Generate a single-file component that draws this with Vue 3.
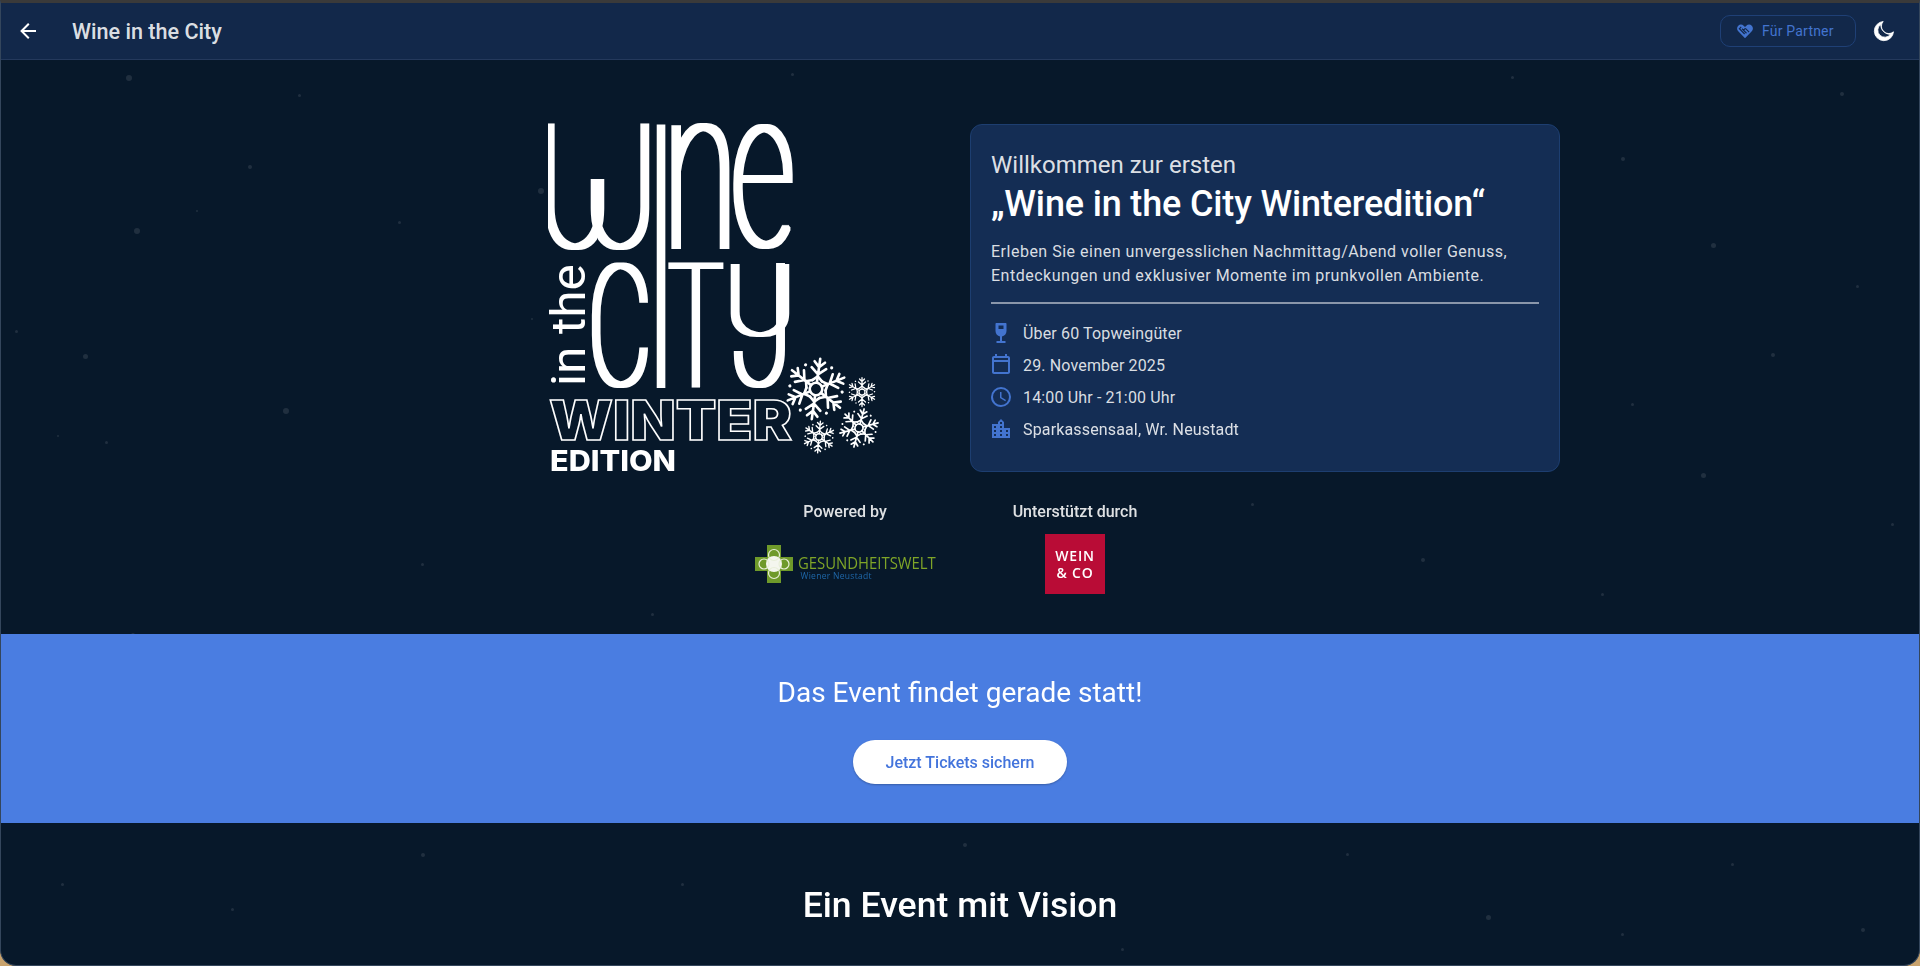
<template>
  <div class="app">
    <div class="stars">
      <span
        v-for="(s, i) in sterne"
        :key="i"
        class="star"
        :style="{ left: s[0] + 'px', top: s[1] + 'px', width: s[2] + 'px', height: s[2] + 'px' }"
      ></span>
    </div>

    <header class="bar">
      <button class="icon-btn back" aria-label="Zurück">
        <svg viewBox="0 0 24 24" width="24" height="24"><path d="M20,11V13H8L13.5,18.5L12.08,19.92L4.16,12L12.08,4.08L13.5,5.5L8,11H20Z" /></svg>
      </button>
      <div class="bar-title">Wine in the City</div>
      <button class="partner">
        <svg viewBox="0 0 24 24" width="18" height="18" class="partner-icon">
          <path d="M12 21.5 3 12.4C.9 10.2.9 6.9 3 4.9c2-1.9 5.200-1.900 7.200 0L12 6.600l1.800-1.700c2-1.900 5.200-1.900 7.200 0 2.100 2 2.100 5.300 0 7.500z" />
          <path class="partner-cut" d="M7 6.500 4.500 9l7 7M10 11l4 4M12.500 8.500l5 5M12.500 8.500 10 11 8 9" />
        </svg>
        Für Partner
      </button>
      <button class="icon-btn moon" aria-label="Design">
        <svg viewBox="0 0 24 24" width="24" height="24"><path d="M11.200 2.500A9.600 9.600 0 1 0 21.500 12.800 7.300 7.300 0 0 1 11.200 2.500M8.600 5.600a10 10 0 0 0 9.800 9.800A7 7 0 1 1 8.600 5.600Z" /></svg>
      </button>
    </header>

    <main class="seite">
      <section class="hero">
        <div class="hero-row">
          <svg class="logo" viewBox="0 0 422 356" width="422" height="356" role="img" aria-label="Wine in the City Winter Edition">
            <defs>
              <!-- macht die duennen Buchstaben nur seitlich breiter -->
              <filter id="breit" filterUnits="userSpaceOnUse" x="-10" y="-10" width="300" height="300">
                <feMorphology operator="dilate" radius="3 0.8" />
              </filter>
            </defs>
            <g class="tall" filter="url(#breit)">
              <text
                v-for="(b, i) in buchstaben"
                :key="i"
                :transform="`translate(${b.x} ${b.y}) scale(${b.sx} ${b.sy})`"
              >{{ b.c }}</text>
            </g>
            <rect x="39" y="0" width="18" height="58" class="logo-cut" />
            <text class="logo-in" transform="translate(37 265) rotate(-90)" textLength="122" lengthAdjust="spacingAndGlyphs">in the</text>
            <text class="logo-winter" x="1" y="319" textLength="243" lengthAdjust="spacingAndGlyphs">WINTER</text>
            <text class="logo-edition" x="2" y="350" textLength="126" lengthAdjust="spacingAndGlyphs">EDITION</text>

            <g
              v-for="(f, i) in flocken"
              :key="'f' + i"
              class="flake"
              :transform="`translate(${f.x} ${f.y}) scale(${f.s}) rotate(${f.r})`"
            >
              <circle r="6" />
              <g v-for="a in 6" :key="a" :transform="`rotate(${a * 60})`">
                <path d="M0 -6V-29M0 -14l-7 -6M0 -14l7 -6M0 -21l-5 -5M0 -21l5 -5M-4.500 -8l-6 2M4.500 -8l6 2" />
                <circle cx="12" cy="-22" r="1.500" class="dot" />
              </g>
            </g>
          </svg>

          <div class="karte">
            <div class="willkommen">Willkommen zur ersten</div>
            <h1>„Wine in the City Winteredition“</h1>
            <p>Erleben Sie einen unvergesslichen Nachmittag/Abend voller Genuss, Entdeckungen und exklusiver Momente im prunkvollen Ambiente.</p>
            <hr />
            <ul>
              <li v-for="f in fakten" :key="f.text">
                <svg viewBox="0 0 24 24" width="24" height="24"><path :d="f.icon" /></svg>
                {{ f.text }}
              </li>
            </ul>
          </div>
        </div>

        <div class="sponsoren">
          <div class="sponsor">
            <div class="sponsor-label">Powered by</div>
            <div class="gw">
              <svg viewBox="0 0 38 38" width="38" height="38">
                <path d="M12 0H26V12H38V26H26V38H12V26H0V12H12Z" fill="#6f9a2a" />
                <circle cx="19" cy="19" r="8" fill="#f4f6ee" />
                <circle cx="19" cy="10" r="5.500" fill="none" stroke="#e8efd8" stroke-width="1.200" />
                <circle cx="19" cy="28" r="5.500" fill="none" stroke="#e8efd8" stroke-width="1.200" />
                <circle cx="9" cy="19" r="5" fill="none" stroke="#e8efd8" stroke-width="1.200" />
                <circle cx="29" cy="19" r="5" fill="none" stroke="#e8efd8" stroke-width="1.200" />
              </svg>
              <div class="gw-text">
                <div class="gw-name">GESUNDHEITSWELT</div>
                <div class="gw-ort">Wiener Neustadt</div>
              </div>
            </div>
          </div>
          <div class="sponsor">
            <div class="sponsor-label">Unterstützt durch</div>
            <div class="wein">WEIN<br />&amp; CO</div>
          </div>
        </div>
      </section>

      <section class="band">
        <h2>Das Event findet gerade statt!</h2>
        <button class="tickets">Jetzt Tickets sichern</button>
      </section>

      <section class="vision">
        <h2>Ein Event mit Vision</h2>
      </section>
    </main>
  </div>
</template>

<script setup>
const sterne = [
  [125, 72, 6], [297, 91, 3], [247, 162, 4], [537, 185, 6], [195, 207, 2], [133, 225, 6],
  [397, 218, 3], [14, 327, 3], [530, 315, 2], [82, 351, 5], [282, 405, 6], [56, 432, 2],
  [104, 438, 3], [790, 70, 3], [1510, 73, 3], [1620, 154, 4], [1839, 89, 4], [1855, 282, 3],
  [1710, 240, 5], [1630, 400, 3], [1770, 350, 4], [1700, 470, 5], [1890, 520, 3], [1250, 500, 3],
  [1420, 555, 4], [1600, 590, 3], [130, 630, 4], [420, 560, 3], [650, 610, 3], [420, 850, 4],
  [230, 905, 3], [680, 880, 3], [962, 840, 4], [1485, 912, 5], [1730, 860, 3], [1860, 925, 4],
  [1120, 945, 3], [60, 880, 3], [1345, 850, 3], [1620, 930, 3]
]

const buchstaben = [
  { c: 'U', x: -9, y: 126, sx: 1.08, sy: 1.72 },
  { c: 'U', x: 36, y: 126, sx: 1.08, sy: 1.72 },
  { c: 'I', x: 100, y: 266, sx: 1, sy: 3.68 },
  { c: 'n', x: 115, y: 127, sx: 1.36, sy: 2.3 },
  { c: 'e', x: 183, y: 125, sx: 1.26, sy: 2.25 },
  { c: 'C', x: 40, y: 264, sx: 0.98, sy: 1.68 },
  { c: 'T', x: 121, y: 265, sx: 0.9, sy: 1.72 },
  { c: 'U', x: 176, y: 214, sx: 1.08, sy: 0.98 },
  { c: 'J', x: 184, y: 264, sx: 1.1, sy: 1.7 }
]

const flocken = [
  { x: 268, y: 268, s: 1.05, r: 8 },
  { x: 314, y: 271, s: 0.5, r: 0 },
  { x: 311, y: 307, s: 0.68, r: 15 },
  { x: 271, y: 316, s: 0.55, r: 5 }
]

const fakten = [
  { text: 'Über 60 Topweingüter', icon: 'M7.500 2h9c.6 0 1 .4 1 1v7c0 3-2.100 5.100-4.500 5.400V20h3.500v2h-9v-2H11v-4.600C8.600 15.100 6.500 13 6.500 10V3c0-.6.4-1 1-1M9.500 4.500V8h5V4.500Z' },
  { text: '29. November 2025', icon: 'M19 3H18V1H16V3H8V1H6V3H5C3.890 3 3 3.900 3 5V19C3 20.100 3.890 21 5 21H19C20.100 21 21 20.100 21 19V5C21 3.900 20.100 3 19 3M19 19H5V9H19V19M19 7H5V5H19V7Z' },
  { text: '14:00 Uhr - 21:00 Uhr', icon: 'M12,20A8,8 0 0,0 20,12A8,8 0 0,0 12,4A8,8 0 0,0 4,12A8,8 0 0,0 12,20M12,2A10,10 0 0,1 22,12A10,10 0 0,1 12,22C6.470,22 2,17.500 2,12A10,10 0 0,1 12,2M12.500,7V12.250L17,14.920L16.250,16.150L11,13V7H12.500Z' },
  { text: 'Sparkassensaal, Wr. Neustadt', icon: 'M19,15H17V13H19M19,19H17V17H19M13,7H11V5H13M13,11H11V9H13M13,15H11V13H13M13,19H11V17H13M7,11H5V9H7M7,15H5V13H7M7,19H5V17H7M15,11V5L12,2L9,5V7H3V21H21V11H15Z' }
]
</script>

<style scoped>
.app {
  position: relative;
  height: 966px;
  box-sizing: border-box;
  overflow: hidden;
  background: #07182a;
  border-top: 3px solid #3a3a3a;
  border-left: 1px solid #34465c;
  border-right: 1px solid #34465c;
  border-bottom: 1px solid #34465c;
  border-radius: 0 0 16px 16px;
  font-family: Roboto, "Liberation Sans", sans-serif;
  color: #fff;
}

.stars {
  position: absolute;
  inset: 0;
}

.star {
  position: absolute;
  border-radius: 50%;
  background: rgba(255, 255, 255, 0.1);
}

.bar {
  position: relative;
  display: flex;
  align-items: center;
  height: 56px;
  background: #12284a;
  border-bottom: 1px solid #24395c;
}

button {
  font-family: inherit;
  background: none;
  border: none;
  padding: 0;
  color: inherit;
}

.icon-btn {
  display: flex;
  align-items: center;
  justify-content: center;
}

.icon-btn svg {
  fill: #fff;
}

.back {
  width: 24px;
  margin-left: 15px;
}

.bar-title {
  margin-left: 32px;
  flex: 1;
  font-size: 21.600px;
  font-weight: 500;
  color: rgba(255, 255, 255, 0.87);
}

.partner {
  display: flex;
  align-items: center;
  gap: 8px;
  width: 136px;
  height: 32px;
  box-sizing: border-box;
  padding-left: 15px;
  border: 1px solid #1f4076;
  border-radius: 10px;
  color: #4374cf;
  font-size: 14px;
  letter-spacing: 0.2px;
}

.partner-icon {
  fill: #4374cf;
}

.partner-cut {
  fill: none;
  stroke: #12284a;
  stroke-width: 1.500;
}

.moon {
  width: 24px;
  margin: 0 23px 0 16px;
}

.moon path {
  stroke: #fff;
  stroke-width: 0.8;
}

.seite {
  position: relative;
}

.hero {
  padding-top: 61px;
}

.hero-row {
  display: flex;
  align-items: flex-start;
  padding-left: 547px;
}

.logo {
  display: block;
  flex: none;
  margin-bottom: -4px;
}

.tall text {
  font-family: Roboto, sans-serif;
  font-size: 100px;
  font-weight: 100;
  fill: #fff;
}

.logo-cut {
  fill: #07182a;
}

.logo-in {
  font-family: Roboto, sans-serif;
  font-size: 48px;
  font-weight: 400;
  fill: #fff;
}

.logo-winter {
  font-family: Inter, Lato, sans-serif;
  font-size: 55px;
  font-weight: 900;
  fill: #07182a;
  stroke: #fff;
  stroke-width: 1.500px;
}

.logo-edition {
  font-family: Inter, Lato, sans-serif;
  font-size: 29px;
  font-weight: 800;
  fill: #fff;
}

.flake path {
  fill: none;
  stroke: #fff;
  stroke-width: 2.500;
  stroke-linecap: round;
}

.flake > circle {
  fill: none;
  stroke: #fff;
  stroke-width: 2.500;
}

.flake .dot {
  fill: #fff;
}

.karte {
  flex: none;
  width: 590px;
  height: 348px;
  box-sizing: border-box;
  margin-top: 3px;
  padding: 26px 20px 0;
  background: #142d54;
  border: 1px solid #1d3e70;
  border-radius: 12px;
}

.willkommen {
  font-size: 24px;
  line-height: 28px;
  color: rgba(255, 255, 255, 0.87);
}

h1 {
  margin: 3px 0 0;
  font-size: 36px;
  line-height: 44px;
  font-weight: 500;
  letter-spacing: -0.16px;
  color: #fff;
}

p {
  margin: 14px 0 0;
  font-size: 16px;
  line-height: 24px;
  letter-spacing: 0.5px;
  color: rgba(255, 255, 255, 0.85);
}

hr {
  margin: 14px 0 0;
  border: none;
  border-top: 2px solid rgba(255, 255, 255, 0.5);
}

ul {
  list-style: none;
  margin: 13px 0 0;
  padding: 0;
}

li {
  display: flex;
  align-items: center;
  gap: 10px;
  height: 32px;
  font-size: 16px;
  letter-spacing: 0.15px;
  color: rgba(255, 255, 255, 0.85);
}

li svg {
  width: 24px;
  height: 24px;
  margin-left: -2px;
  fill: #4374cf;
}

.sponsoren {
  display: flex;
  justify-content: center;
  gap: 30px;
  margin-top: 27px;
  height: 134px;
}

.sponsor {
  width: 200px;
  display: flex;
  flex-direction: column;
  align-items: center;
}

.sponsor-label {
  font-size: 16px;
  line-height: 24px;
  font-weight: 500;
  color: rgba(255, 255, 255, 0.87);
}

.gw {
  display: flex;
  align-items: center;
  gap: 5px;
  margin: 21px 0 0 4px;
}

.gw-text {
  font-family: "Open Sans", sans-serif;
  margin-top: 8px;
}

.gw-name {
  font-size: 16px;
  line-height: 16px;
  color: #7fa528;
  transform: scaleX(0.93);
  transform-origin: left;
  width: 142px;
  white-space: nowrap;
}

.gw-ort {
  margin-left: 3px;
  font-size: 8.500px;
  line-height: 10px;
  letter-spacing: 0.3px;
  color: #1f68aa;
}

.wein {
  width: 60px;
  height: 60px;
  margin-top: 10px;
  display: flex;
  align-items: center;
  justify-content: center;
  text-align: center;
  background: #b90c36;
  color: #fff;
  font-family: "Open Sans", sans-serif;
  font-size: 14px;
  line-height: 17px;
  font-weight: 600;
  letter-spacing: 0.8px;
}

.band {
  display: flex;
  flex-direction: column;
  align-items: center;
  height: 189px;
  padding-top: 39px;
  box-sizing: border-box;
  background: #4a7de1;
}

.band h2 {
  margin: 0;
  font-size: 28px;
  line-height: 40px;
  font-weight: 400;
  color: #fff;
}

.tickets {
  width: 214px;
  height: 44px;
  margin-top: 27px;
  background: #fff;
  border-radius: 22px;
  color: #4374dc;
  font-size: 16px;
  font-weight: 500;
  box-shadow: 0 1px 2px rgba(0, 0, 0, 0.25);
}

.vision {
  display: flex;
  justify-content: center;
  padding-top: 56px;
}

.vision h2 {
  margin: 0;
  font-size: 35.600px;
  line-height: 52px;
  font-weight: 500;
  color: #fff;
}
</style>

<style>
html,
body {
  background: #c9a36d;
}
</style>
